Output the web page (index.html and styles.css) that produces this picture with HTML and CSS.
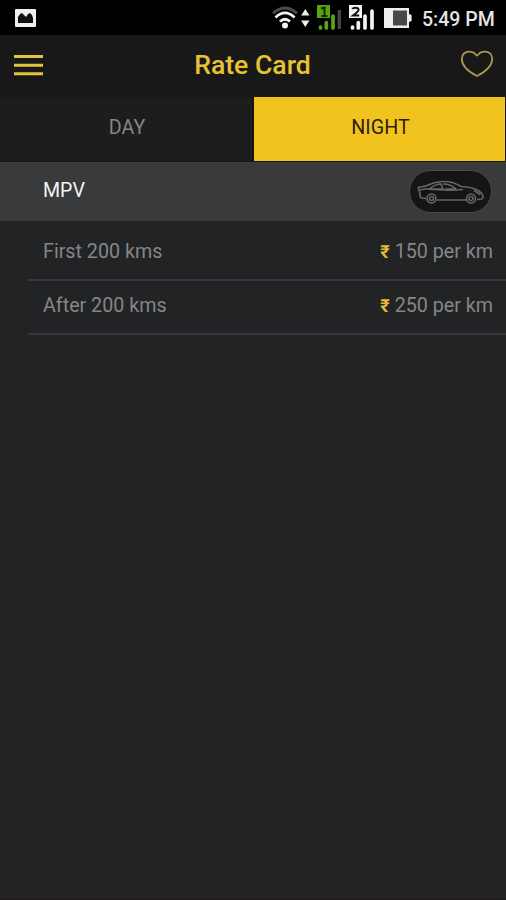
FILE: index.html
```html
<!DOCTYPE html>
<html lang="en">
<head>
<meta charset="utf-8">
<title>Rate Card</title>
<link rel="stylesheet" href="styles.css">
</head>
<body>
<div class="screen">
  <div class="status">
    <svg class="photo" width="21" height="18" viewBox="0 0 21 18"><rect width="21" height="18" rx="1" fill="#f0f0f0"/><path d="M3 14V8l2-3 2-1 2 2 2 2 2-3 2-1 2 2 1 3v5z" fill="#111"/></svg>
    <svg class="wifi" width="38" height="24" viewBox="0 0 38 24" fill="none" stroke-width="2.8"><path d="M1 7.2Q13-3.2 25 7.2" stroke="#4b4b4b"/><path d="M3.5 11.4Q13 2.4 22.5 11.4M8 15.5Q13 11 18 15.5" stroke="#f2f2f2"/><circle cx="13" cy="19.6" r="3" fill="#f2f2f2"/><path d="M33.3 3l4.2 6.5h-8.4zM33.3 21l4.2-6.5h-8.4z" fill="#eee"/></svg>
    <svg class="signal one" width="26" height="26" viewBox="0 0 26 26"><rect width="13" height="13" fill="#58a512"/><path d="M4 3.5l3.5-1V11M4.5 11h6" fill="none" stroke="#132600" stroke-width="2"/><path d="M3.5 23v-1M9.3 23v-5.5M16 23V11" stroke="#58a512" stroke-width="3.7" stroke-linecap="round"/><path d="M22.3 24V5" stroke="#444" stroke-width="3.5"/></svg>
    <svg class="signal two" width="26" height="26" viewBox="0 0 26 26"><rect width="13" height="13" fill="#f2f2f2"/><path d="M3.3 4Q4 2.7 6.5 2.7 9.6 2.7 9.6 5 9.6 6.3 4 10.5h6.2" fill="none" stroke="#111" stroke-width="1.9"/><path d="M3.5 23v-1M9.3 23v-5.5M16 23V11M23 23V6" stroke="#f2f2f2" stroke-width="3.7" stroke-linecap="round"/></svg>
    <svg class="battery" width="28" height="20" viewBox="0 0 28 20"><path d="M0 0h25v6l2.6 1v6L25 14v6H0z" fill="#eee"/><path d="M9 2.5h14v15H9z" fill="#484848"/></svg>
    <span class="time">5:49 PM</span>
  </div>
  <header class="header">
    <svg class="menu" width="29" height="23" viewBox="0 0 29 23"><path d="M0 2.5h29M0 11.3h29M0 19.8h29" stroke="#e3c23e" stroke-width="3.1"/></svg>
    <h1>Rate Card</h1>
    <svg class="heart" width="34" height="28" viewBox="0 0 34 28"><path d="M17 26C10 22.5 1.8 17 1.8 9 1.8 4.2 5.1 1.6 9 1.6c3 0 4.8.5 6.2 2.5L17 5.6l1.8-1.5c1.4-2 3.2-2.5 6.2-2.5 3.9 0 7.2 2.6 7.2 7.4 0 8-8.2 13.5-15.2 17z" fill="none" stroke="#a8974f" stroke-width="1.8" stroke-linejoin="round"/></svg>
  </header>
  <nav class="tabs"><div class="tab">DAY</div><div class="tab active">NIGHT</div></nav>
  <section class="vehicle">
    <span class="name">MPV</span>
    <div class="pill">
      <svg width="68" height="24" viewBox="0 0 68 24" fill="none" stroke="#666" stroke-width="1.6" stroke-linejoin="round"><path d="M9 18.5L4.5 18Q3 17.5 3 14L1.2 7.5Q6 6.500 10 5.500Q17 2 25 1.500q11-.5 19 5 12 .5 18 4.500 4 3 4 6.500 0 2-6 2M20 20H49"/><path d="M3 10l7-1.500M13 8.500Q18 4 24 4l2 5H15zM26 4q7-.3 13 5H28M10 9q20 2 36 .5M57 10.500l6 4"/><circle cx="14.500" cy="18.500" r="4.500"/><circle cx="14.500" cy="18.500" r="2"/><circle cx="54" cy="18.500" r="4.500"/><circle cx="54" cy="18.500" r="2"/></svg>
    </div>
  </section>
  <div class="rates">
    <div class="rate first"><span>First 200 kms</span><span class="price"><b>₹</b>150 per km</span></div>
    <div class="rate"><span>After 200 kms</span><span class="price"><b>₹</b>250 per km</span></div>
  </div>
</div>
</body>
</html>
```
FILE: styles.css
```css
* { box-sizing: border-box; }
body { margin: 0; background: #212325; font-family: Roboto, sans-serif; }
.screen { height: 900px; border-bottom: 1px solid #21181c; overflow: hidden; }
svg { display: block; flex: none; }
.status { height: 35px; background: #000; display: flex; align-items: flex-start; padding: 0 10px 0 15px; }
.photo { margin-top: 9px; }
.wifi { margin: 6px 0 0 auto; }
.signal { margin-top: 5px; }
.one { margin-left: 7px; }
.two { margin-left: 6px; }
.battery { margin: 8px 0 0 9px; }
.time { margin-left: 10px; width: 74px; font-size: 19.5px; font-weight: 500; line-height: 39px; color: #e4e4e4; white-space: nowrap; }
.header { height: 62px; background: #181818; display: grid; grid-template-columns: 34px 1fr 34px; align-items: center; padding: 0 12px 3px 14px; }
.menu { margin-top: 2px; }
.heart { margin-top: -2px; }
.header h1 { margin: 0; padding-right: 3px; text-align: center; font-size: 26.6px; font-weight: 500; line-height: 36px; color: #e6c235; }
.tabs { height: 65px; background: #151515; display: grid; grid-template-columns: 252px 251px; column-gap: 2px; padding: 0 1px 1px 0; }
.tab { display: flex; align-items: center; justify-content: center; padding: 0 0 4px 2px; font-size: 19.7px; background: #1d1d1d; color: #858585; }
.active { background: #f2c31e; color: #29230c; }
.vehicle { height: 59px; background: #393a3c; display: flex; align-items: center; justify-content: space-between; padding: 0 14px 0 43px; font-size: 19.6px; color: #f2f2f2; }
.name { padding-bottom: 2px; }
.pill { width: 83px; height: 43px; border: 1px solid #4a4a4a; border-radius: 22px; background: #151515; display: flex; align-items: center; justify-content: center; }
.rates { margin-left: 28px; }
.rate { height: 54px; border-bottom: 2px solid #35373a; display: flex; align-items: center; justify-content: space-between; padding: 0 13px 4px 15px; font-size: 19.7px; color: #858688; }
.first { height: 60px; padding: 2px 13px 0 15px; }
.price { display: flex; align-items: center; }
.price b { color: #e2bc32; font-size: 18px; font-weight: 700; margin-right: 5px; }
```
